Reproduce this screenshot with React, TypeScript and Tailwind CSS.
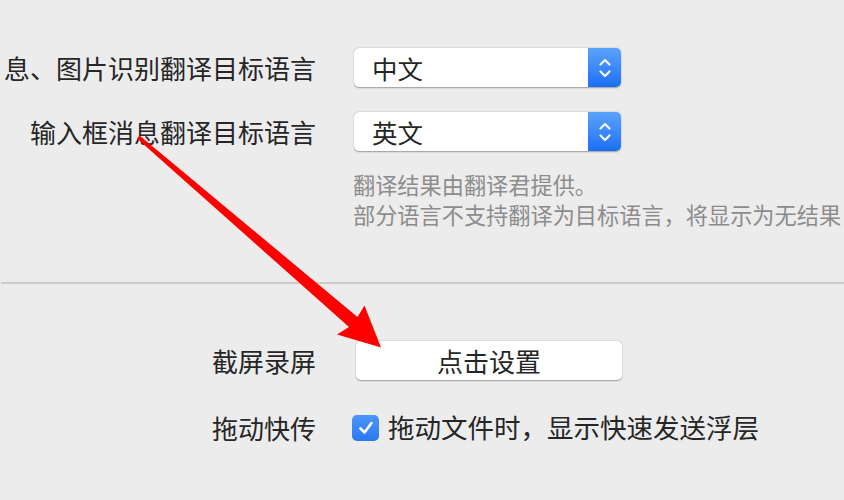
import React from 'react';

const font = { fontFamily: '"Noto Sans CJK SC", "Noto Sans", sans-serif' };

const Select = ({ value }: { value: string }) => (
  <div className="flex h-[39px] w-[267px] items-stretch overflow-hidden rounded-[5px] bg-white shadow-[0_0.5px_1.5px_rgba(0,0,0,0.35)]">
    <div className="flex flex-1 items-center pl-[18px] text-[25.5px] leading-none text-[#262626]">{value}</div>
    <div className="flex w-[33px] items-center justify-center bg-gradient-to-b from-[#5ba2fc] to-[#1b6ff6]">
      <svg width="14" height="24" viewBox="0 0 14 24" fill="none" stroke="white" strokeWidth="2.2" strokeLinecap="round" strokeLinejoin="round">
        <path d="M2.5 8.5 L7 4 L11.5 8.5" />
        <path d="M2.5 15.5 L7 20 L11.5 15.5" />
      </svg>
    </div>
  </div>
);

const Label = ({ children }: { children: React.ReactNode }) => (
  <div className="flex w-[316px] shrink-0 justify-end whitespace-nowrap text-[26px] leading-none text-[#262626]">
    {children}
  </div>
);

export default function App() {
  return (
    <div className="relative h-[500px] w-[844px] overflow-hidden bg-[#ececec]" style={font}>
      <div className="pt-[48px]">
        <div className="flex items-center">
          <Label>息、图片识别翻译目标语言</Label>
          <div className="ml-[38px]">
            <Select value="中文" />
          </div>
        </div>

        <div className="mt-[25px] flex items-center">
          <Label>输入框消息翻译目标语言</Label>
          <div className="ml-[38px]">
            <Select value="英文" />
          </div>
        </div>

        <div className="ml-[353px] mt-[18px] whitespace-nowrap text-[22.2px] leading-[30px] text-[#8c8c8c]">
          <div>翻译结果由翻译君提供。</div>
          <div>部分语言不支持翻译为目标语言，将显示为无结果</div>
        </div>

        <div className="ml-[1px] mt-[53px] h-[2px] bg-[#cbcbcb]" />

        <div className="mt-[57px] flex items-center">
          <Label>截屏录屏</Label>
          <div className="ml-[40px]">
            <div className="flex h-[39px] w-[266px] items-center justify-center rounded-[5px] bg-white text-[26px] leading-none text-[#262626] shadow-[0_0.5px_1.5px_rgba(0,0,0,0.35)]">
              点击设置
            </div>
          </div>
        </div>

        <div className="mt-[28px] flex h-[39px] items-center">
          <Label>拖动快传</Label>
          <div className="ml-[36px] flex items-center">
            <div className="flex h-[26px] w-[27px] items-center justify-center rounded-[5px] bg-gradient-to-b from-[#4c95fa] to-[#2a78f2]">
              <svg width="18" height="16" viewBox="0 0 18 16" fill="none" stroke="white" strokeWidth="2.6" strokeLinecap="round" strokeLinejoin="round">
                <path d="M3.5 8.5 L7.5 12.5 L14.5 3" />
              </svg>
            </div>
            <span className="ml-[9px] whitespace-nowrap text-[26.5px] leading-none text-[#262626]">拖动文件时，显示快速发送浮层</span>
          </div>
        </div>
      </div>

      <svg className="pointer-events-none absolute left-0 top-0" width="844" height="500" viewBox="0 0 844 500">
        <polygon
          points="137,138.5 349,327 337,334.5 381,347.5 364.5,305.5 357.5,317 139.5,135.5"
          fill="#ff0000"
        />
      </svg>
    </div>
  );
}
